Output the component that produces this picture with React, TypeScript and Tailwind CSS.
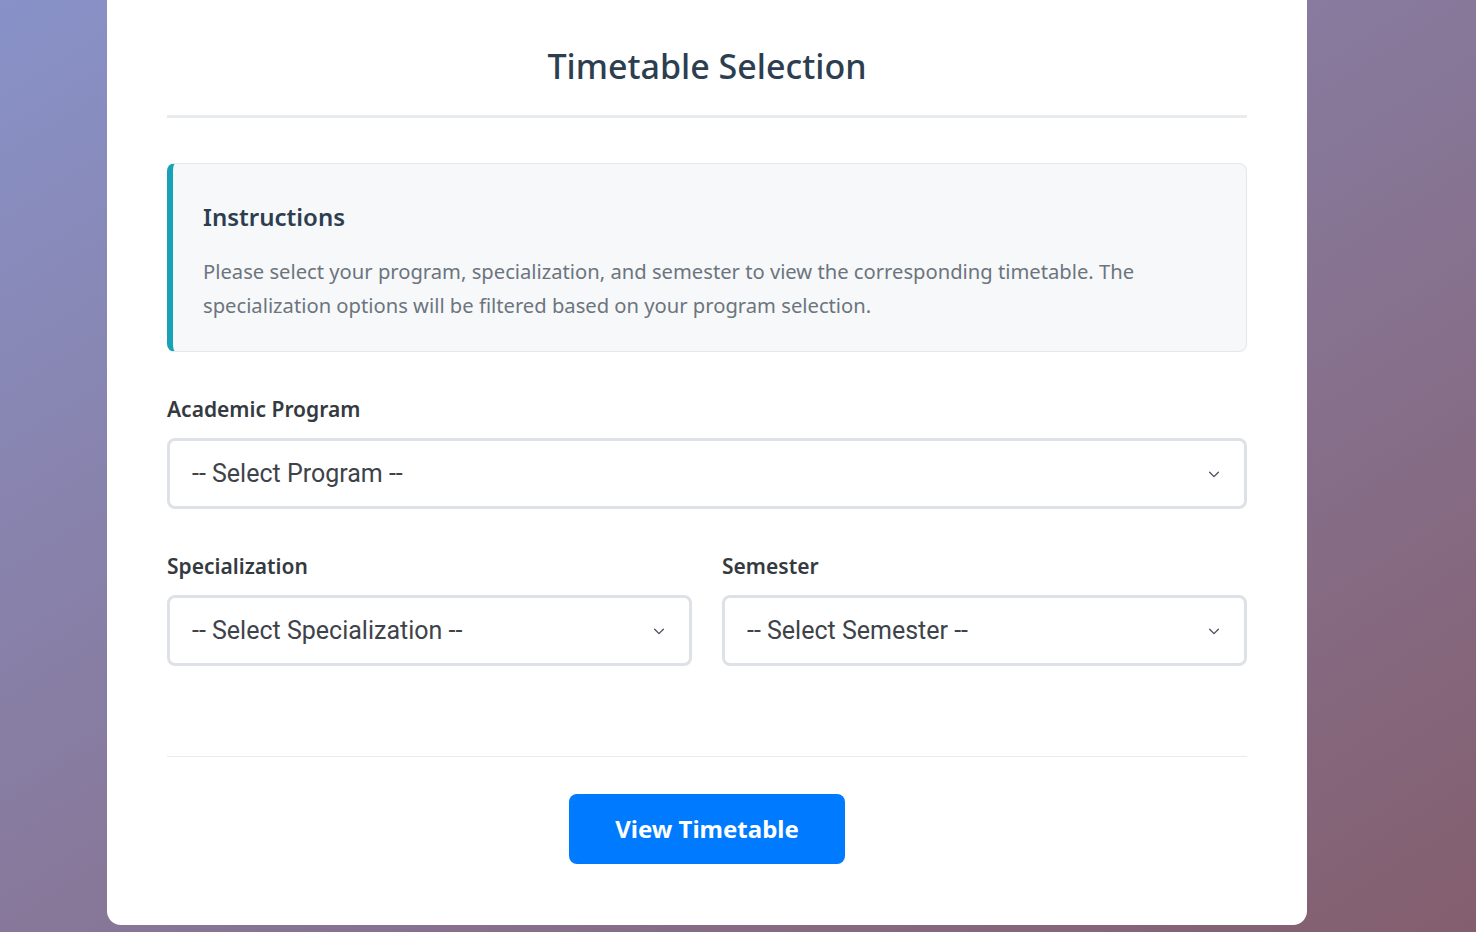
import { useState } from "react";

const Chevron = () => (
  <svg width="14" height="14" viewBox="0 0 16 16" fill="none" className="pointer-events-none absolute right-[26px] top-1/2 -translate-y-1/2">
    <path d="M3 6l5 5 5-5" stroke="#4b5563" strokeWidth="1.6" strokeLinecap="round" strokeLinejoin="round" />
  </svg>
);

const SelectBox = ({ label, placeholder, value, onChange }: { label: string; placeholder: string; value: string; onChange: (v: string) => void }) => (
  <div className="flex flex-col">
    <label className="mb-[14px] text-[21px] font-semibold leading-[30px] text-[#343a40]">{label}</label>
    <div className="relative">
      <select
        value={value}
        onChange={(e) => onChange(e.target.value)}
        className="h-[71px] w-full appearance-none rounded-[8px] border-[3px] border-[#dee2e6] bg-white pl-[22px] pr-12 font-['Roboto',sans-serif] text-[25px] text-[#3d4349] outline-none"
      >
        <option value="">{placeholder}</option>
      </select>
      <Chevron />
    </div>
  </div>
);

export default function App() {
  const [program, setProgram] = useState("");
  const [spec, setSpec] = useState("");
  const [sem, setSem] = useState("");

  return (
    <div className="min-h-[932px] bg-gradient-to-br from-[#8892c8] to-[#835e6e] font-['Noto_Sans',sans-serif]">
      <div className="ml-[107px] w-[1200px] rounded-b-[14px] bg-white px-[60px] pb-[61px] pt-[41px]">
        {/* header */}
        <h1 className="text-center text-[34px] font-medium leading-[50px] text-[#2c3e50]">Timetable Selection</h1>
        <div className="mt-[24px] h-[3px] bg-[#e9ecef]" />

        {/* instructions */}
        <div className="mt-[45px] rounded-[8px] border border-[#e5e7eb] border-l-[6px] border-l-[#17a2b8] bg-[#f7f8fa] px-[30px] pb-[29px] pt-[36px]">
          <h3 className="text-[24px] font-semibold leading-[34px] text-[#2c3e50]">Instructions</h3>
          <p className="mt-[20px] text-[20.2px] leading-[34px] text-[#6c757d]">
            Please select your program, specialization, and semester to view the corresponding timetable. The specialization options will be filtered based on your program selection.
          </p>
        </div>

        <div className="mt-[42px]">
          <SelectBox label="Academic Program" placeholder="-- Select Program --" value={program} onChange={setProgram} />
        </div>

        <div className="mt-[42px] grid grid-cols-2 gap-[30px]">
          <SelectBox label="Specialization" placeholder="-- Select Specialization --" value={spec} onChange={setSpec} />
          <SelectBox label="Semester" placeholder="-- Select Semester --" value={sem} onChange={setSem} />
        </div>

        <div className="mt-[90px] border-t border-[#e9ecef] pt-[37px] text-center">
          <button className="h-[70px] w-[276px] rounded-[8px] bg-[#007bff] text-[24px] font-bold text-white">View Timetable</button>
        </div>
      </div>
    </div>
  );
}
